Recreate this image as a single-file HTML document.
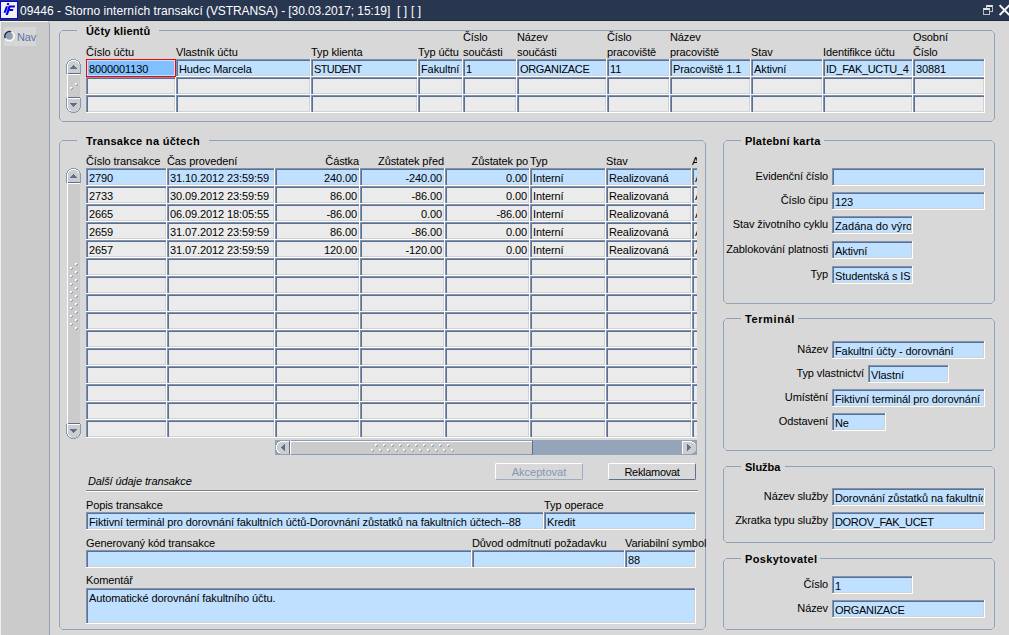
<!DOCTYPE html><html><head><meta charset="utf-8"><style>
*{box-sizing:border-box}
html,body{margin:0;padding:0}
body{width:1009px;height:635px;overflow:hidden;position:relative;background:#d8d8d8;font-family:"Liberation Sans",sans-serif;font-size:11px;color:#000}
div{position:absolute}
.title{left:0;top:0;width:1009px;height:21px;background:#283650;border-bottom:1px solid #1f2a3d}
.tline{left:0;top:21px;width:48px;height:1px;background:#f8f8f8}
.ttext{left:20px;top:4px;font-size:12px;line-height:14px;color:#fff;white-space:nowrap;letter-spacing:0.06px}
.nav{left:0;top:22px;width:49px;height:613px;background:#cbcbcb;border-left:1px solid #eeeeee}
.f{box-shadow:inset -1px -1px 0 #fff,inset 1px 1px 0 #7f92af,inset 2px 2px 0 #5c7092,inset -2px -2px 0 #d2d2d2;overflow:hidden;white-space:nowrap}
.sel{box-shadow:inset 0 0 0 1px #ff0000,inset 0 0 0 2px #c4e2ff}
.c{left:2px;top:2px;right:2px;bottom:2px;overflow:hidden}
.tl{position:absolute;left:1px;top:2px;line-height:13px;letter-spacing:-0.1px}
.tr{position:absolute;right:1px;top:2px;line-height:13px;letter-spacing:-0.1px}
.lb{line-height:13px;white-space:nowrap;letter-spacing:-0.1px}
.lg{line-height:13px;white-space:nowrap;font-weight:bold}
.fr{border:1px solid #91a2b8;border-radius:4px}
.gap{height:1px;background:#d8d8d8}
.vtrack{width:13px;background:#cbcbcb;border-left:1px solid #fff}
.vbtn{width:15px;height:15px;background:#cdcdcd;border:1px solid #7d90ad}
.vbtn.up{border-radius:7px 7px 0 0;border-bottom:1px solid #5c7091;box-shadow:inset 1px 1px 0 #fff}
.vbtn.dn{border-radius:0 0 7px 7px;border-top:1px solid #5c7091;box-shadow:inset 1px 0 0 #fff}
.vbtn i{position:absolute;left:3px;width:0;height:0;border-left:4px solid transparent;border-right:4px solid transparent}
.vbtn.up i{top:5px;border-bottom:4px solid #5c7091}
.vbtn.dn i{top:5px;border-top:4px solid #5c7091}
.dot{width:1px;height:1px;background:#fff;box-shadow:1px 0 #fff,0 1px #fff,1px 1px #c5cedb,2px 1px #8397b5,1px 2px #8397b5}
.btn{height:17px;border:1px solid #5c7091;border-top-color:#fff;border-left-color:#fff;border-radius:2px;background:#d8d8d8;text-align:center;line-height:13px;padding-top:2px;white-space:nowrap}
</style></head><body>

<div class="title"></div><div class="tline"></div>
<div style="left:0;top:1px;width:18px;height:18px;border:1px solid #0000ff;background:#f3f1ea"><svg width="16" height="16" style="position:absolute;left:0;top:0"><path d="M6.2 1L8.3 1L7.8 3.1L5.7 3.1Z M4.9 4.2L7 4.2L4.7 10.8L2.5 10.8Z M7.7 3.4L14.2 3.4L13.6 5.6L9.4 5.6L9 6.9L12.4 6.9L11.9 9L8.3 9L6.9 13L4.6 13Z" fill="#0000f0"/></svg></div>
<div class="ttext">09446 - Storno interních transakcí </div><div class="ttext" style="left:206px;letter-spacing:-0.08px">(VSTRANSA) - [30.03.2017; 15:19]</div><div class="ttext" style="left:397px">[ ]</div><div class="ttext" style="left:411px">[ ]</div>
<div style="left:986px;top:5px;width:7px;height:7px;border:1px solid #bdbdbd;border-top:2px solid #e0e0e0"></div>
<div style="left:983px;top:8px;width:7px;height:7px;border:1px solid #bdbdbd;border-top:2px solid #e0e0e0;background:#283650"></div>
<svg style="position:absolute;left:999px;top:4px" width="10" height="12"><path d="M0.6 1.2L10.4 11M10.4 1.2L0.6 11" stroke="#f4f4f4" stroke-width="2"/></svg>
<div class="nav"></div><div style="left:49px;top:23px;width:1px;height:612px;background:#91a2b8"></div><div style="left:48px;top:22px;width:1px;height:1px;background:#a3b1c4"></div>
<div style="left:4px;top:27px;width:32px;height:19px;background:#d6d6d6"></div>
<svg style="position:absolute;left:3px;top:30px" width="13" height="13"><circle cx="6.3" cy="6" r="3.4" fill="#8c9eb9"/><circle cx="6.5" cy="6.2" r="4.7" fill="none" stroke="#fff" stroke-width="1.2"/><path d="M2.3 8.1A4.6 4.6 0 0 1 8.1 1.9" fill="none" stroke="#1c2637" stroke-width="1.5"/></svg>
<div class="lb" style="left:17px;top:31px;color:#5d72a4">Nav</div>
<div style="left:62px;top:30px;width:930px;height:1px;background:#91a2b8"></div>
<div style="left:62px;top:121px;width:930px;height:1px;background:#91a2b8"></div>
<div style="left:59px;top:33px;width:1px;height:86px;background:#91a2b8"></div>
<div style="left:994px;top:33px;width:1px;height:86px;background:#91a2b8"></div>
<div style="left:61px;top:31px;width:1px;height:1px;background:#a3b1c4"></div>
<div style="left:60px;top:32px;width:1px;height:1px;background:#a3b1c4"></div>
<div style="left:992px;top:31px;width:1px;height:1px;background:#a3b1c4"></div>
<div style="left:993px;top:32px;width:1px;height:1px;background:#a3b1c4"></div>
<div style="left:61px;top:120px;width:1px;height:1px;background:#a3b1c4"></div>
<div style="left:60px;top:119px;width:1px;height:1px;background:#a3b1c4"></div>
<div style="left:992px;top:120px;width:1px;height:1px;background:#a3b1c4"></div>
<div style="left:993px;top:119px;width:1px;height:1px;background:#a3b1c4"></div>
<div class="gap" style="left:77px;top:30px;width:82px"></div>
<div class="lg" style="left:86px;top:25px;letter-spacing:0.16px">Účty klientů</div>
<div class="lb" style="left:86px;top:46px;">Číslo účtu</div>
<div class="lb" style="left:176px;top:46px;">Vlastník účtu</div>
<div class="lb" style="left:311px;top:46px;">Typ klienta</div>
<div class="lb" style="left:418px;top:46px;">Typ účtu</div>
<div class="lb" style="left:463px;top:46px;">součásti</div>
<div class="lb" style="left:463px;top:31px;">Číslo</div>
<div class="lb" style="left:517px;top:46px;">součásti</div>
<div class="lb" style="left:517px;top:31px;">Název</div>
<div class="lb" style="left:607px;top:46px;">pracoviště</div>
<div class="lb" style="left:607px;top:31px;">Číslo</div>
<div class="lb" style="left:670px;top:46px;">pracoviště</div>
<div class="lb" style="left:670px;top:31px;">Název</div>
<div class="lb" style="left:751px;top:46px;">Stav</div>
<div class="lb" style="left:823px;top:46px;">Identifikce účtu</div>
<div class="lb" style="left:913px;top:46px;">Číslo</div>
<div class="lb" style="left:913px;top:31px;">Osobní</div>
<div class="f sel" style="left:86px;top:59px;width:90px;height:18px;background:#80c0ff"><div class="c"><span class="tl">8000001130</span></div></div>
<div class="f" style="left:176px;top:59px;width:135px;height:18px;background:#c0e0ff"><div class="c"><span class="tl">Hudec Marcela</span></div></div>
<div class="f" style="left:311px;top:59px;width:107px;height:18px;background:#c0e0ff"><div class="c"><span class="tl" style="letter-spacing:-0.6px">STUDENT</span></div></div>
<div class="f" style="left:418px;top:59px;width:45px;height:18px;background:#c0e0ff"><div class="c"><span class="tl">Fakultní</span></div></div>
<div class="f" style="left:463px;top:59px;width:54px;height:18px;background:#c0e0ff"><div class="c"><span class="tl">1</span></div></div>
<div class="f" style="left:517px;top:59px;width:90px;height:18px;background:#c0e0ff"><div class="c"><span class="tl" style="letter-spacing:-0.33px">ORGANIZACE</span></div></div>
<div class="f" style="left:607px;top:59px;width:63px;height:18px;background:#c0e0ff"><div class="c"><span class="tl">11</span></div></div>
<div class="f" style="left:670px;top:59px;width:81px;height:18px;background:#c0e0ff"><div class="c"><span class="tl">Pracoviště 1.1</span></div></div>
<div class="f" style="left:751px;top:59px;width:72px;height:18px;background:#c0e0ff"><div class="c"><span class="tl">Aktivní</span></div></div>
<div class="f" style="left:823px;top:59px;width:90px;height:18px;background:#c0e0ff"><div class="c"><span class="tl" style="letter-spacing:-0.33px">ID_FAK_UCTU_4</span></div></div>
<div class="f" style="left:913px;top:59px;width:72px;height:18px;background:#c0e0ff"><div class="c"><span class="tl">30881</span></div></div>
<div class="f" style="left:86px;top:77px;width:90px;height:18px;background:#ebebeb"></div>
<div class="f" style="left:176px;top:77px;width:135px;height:18px;background:#ebebeb"></div>
<div class="f" style="left:311px;top:77px;width:107px;height:18px;background:#ebebeb"></div>
<div class="f" style="left:418px;top:77px;width:45px;height:18px;background:#ebebeb"></div>
<div class="f" style="left:463px;top:77px;width:54px;height:18px;background:#ebebeb"></div>
<div class="f" style="left:517px;top:77px;width:90px;height:18px;background:#ebebeb"></div>
<div class="f" style="left:607px;top:77px;width:63px;height:18px;background:#ebebeb"></div>
<div class="f" style="left:670px;top:77px;width:81px;height:18px;background:#ebebeb"></div>
<div class="f" style="left:751px;top:77px;width:72px;height:18px;background:#ebebeb"></div>
<div class="f" style="left:823px;top:77px;width:90px;height:18px;background:#ebebeb"></div>
<div class="f" style="left:913px;top:77px;width:72px;height:18px;background:#ebebeb"></div>
<div class="f" style="left:86px;top:95px;width:90px;height:18px;background:#ebebeb"></div>
<div class="f" style="left:176px;top:95px;width:135px;height:18px;background:#ebebeb"></div>
<div class="f" style="left:311px;top:95px;width:107px;height:18px;background:#ebebeb"></div>
<div class="f" style="left:418px;top:95px;width:45px;height:18px;background:#ebebeb"></div>
<div class="f" style="left:463px;top:95px;width:54px;height:18px;background:#ebebeb"></div>
<div class="f" style="left:517px;top:95px;width:90px;height:18px;background:#ebebeb"></div>
<div class="f" style="left:607px;top:95px;width:63px;height:18px;background:#ebebeb"></div>
<div class="f" style="left:670px;top:95px;width:81px;height:18px;background:#ebebeb"></div>
<div class="f" style="left:751px;top:95px;width:72px;height:18px;background:#ebebeb"></div>
<div class="f" style="left:823px;top:95px;width:90px;height:18px;background:#ebebeb"></div>
<div class="f" style="left:913px;top:95px;width:72px;height:18px;background:#ebebeb"></div>
<div style="left:67px;top:74px;width:13px;height:23px;background:#cbcbcb;border-left:1px solid #fff"></div>
<svg style="position:absolute;left:66px;top:59px" width="15" height="16" shape-rendering="crispEdges"><rect x="5" y="0" width="5" height="1" fill="#8497b4"/><rect x="3" y="1" width="2" height="1" fill="#8497b4"/><rect x="5" y="1" width="5" height="1" fill="#ffffff"/><rect x="10" y="1" width="2" height="1" fill="#8497b4"/><rect x="2" y="2" width="1" height="1" fill="#8497b4"/><rect x="3" y="2" width="2" height="1" fill="#ffffff"/><rect x="5" y="2" width="5" height="1" fill="#cdcdcd"/><rect x="10" y="2" width="2" height="1" fill="#ffffff"/><rect x="12" y="2" width="1" height="1" fill="#8497b4"/><rect x="1" y="3" width="1" height="1" fill="#8497b4"/><rect x="2" y="3" width="1" height="1" fill="#ffffff"/><rect x="3" y="3" width="9" height="1" fill="#cdcdcd"/><rect x="12" y="3" width="1" height="1" fill="#ffffff"/><rect x="13" y="3" width="1" height="1" fill="#8497b4"/><rect x="1" y="4" width="1" height="1" fill="#8497b4"/><rect x="2" y="4" width="1" height="1" fill="#ffffff"/><rect x="3" y="4" width="9" height="1" fill="#cdcdcd"/><rect x="12" y="4" width="1" height="1" fill="#ffffff"/><rect x="13" y="4" width="1" height="1" fill="#8497b4"/><rect x="0" y="5" width="1" height="1" fill="#8497b4"/><rect x="1" y="5" width="1" height="1" fill="#ffffff"/><rect x="2" y="5" width="12" height="1" fill="#cdcdcd"/><rect x="14" y="5" width="1" height="1" fill="#8497b4"/><rect x="0" y="6" width="1" height="1" fill="#8497b4"/><rect x="1" y="6" width="1" height="1" fill="#ffffff"/><rect x="2" y="6" width="5" height="1" fill="#cdcdcd"/><rect x="7" y="6" width="1" height="1" fill="#5a6f92"/><rect x="8" y="6" width="6" height="1" fill="#cdcdcd"/><rect x="14" y="6" width="1" height="1" fill="#8497b4"/><rect x="0" y="7" width="1" height="1" fill="#8497b4"/><rect x="1" y="7" width="1" height="1" fill="#ffffff"/><rect x="2" y="7" width="4" height="1" fill="#cdcdcd"/><rect x="6" y="7" width="3" height="1" fill="#5a6f92"/><rect x="9" y="7" width="5" height="1" fill="#cdcdcd"/><rect x="14" y="7" width="1" height="1" fill="#8497b4"/><rect x="0" y="8" width="1" height="1" fill="#8497b4"/><rect x="1" y="8" width="1" height="1" fill="#ffffff"/><rect x="2" y="8" width="3" height="1" fill="#cdcdcd"/><rect x="5" y="8" width="5" height="1" fill="#5a6f92"/><rect x="10" y="8" width="4" height="1" fill="#cdcdcd"/><rect x="14" y="8" width="1" height="1" fill="#8497b4"/><rect x="0" y="9" width="1" height="1" fill="#8497b4"/><rect x="1" y="9" width="1" height="1" fill="#ffffff"/><rect x="2" y="9" width="2" height="1" fill="#cdcdcd"/><rect x="4" y="9" width="7" height="1" fill="#5a6f92"/><rect x="11" y="9" width="3" height="1" fill="#cdcdcd"/><rect x="14" y="9" width="1" height="1" fill="#8497b4"/><rect x="0" y="10" width="1" height="1" fill="#8497b4"/><rect x="1" y="10" width="1" height="1" fill="#ffffff"/><rect x="2" y="10" width="12" height="1" fill="#cdcdcd"/><rect x="14" y="10" width="1" height="1" fill="#8497b4"/><rect x="0" y="11" width="1" height="1" fill="#8497b4"/><rect x="1" y="11" width="1" height="1" fill="#ffffff"/><rect x="2" y="11" width="12" height="1" fill="#cdcdcd"/><rect x="14" y="11" width="1" height="1" fill="#8497b4"/><rect x="0" y="12" width="1" height="1" fill="#8497b4"/><rect x="1" y="12" width="1" height="1" fill="#ffffff"/><rect x="2" y="12" width="12" height="1" fill="#cdcdcd"/><rect x="14" y="12" width="1" height="1" fill="#8497b4"/><rect x="0" y="13" width="1" height="1" fill="#8497b4"/><rect x="1" y="13" width="1" height="1" fill="#ffffff"/><rect x="2" y="13" width="12" height="1" fill="#cdcdcd"/><rect x="14" y="13" width="1" height="1" fill="#8497b4"/><rect x="0" y="14" width="1" height="1" fill="#8497b4"/><rect x="1" y="14" width="1" height="1" fill="#ffffff"/><rect x="2" y="14" width="12" height="1" fill="#5a6f92"/><rect x="14" y="14" width="1" height="1" fill="#8497b4"/><rect x="1" y="15" width="13" height="1" fill="#ffffff"/></svg>
<svg style="position:absolute;left:66px;top:97px" width="15" height="16" shape-rendering="crispEdges"><rect x="1" y="0" width="1" height="1" fill="#ffffff"/><rect x="2" y="0" width="12" height="1" fill="#5a6f92"/><rect x="0" y="1" width="1" height="1" fill="#8497b4"/><rect x="1" y="1" width="13" height="1" fill="#ffffff"/><rect x="14" y="1" width="1" height="1" fill="#8497b4"/><rect x="0" y="2" width="1" height="1" fill="#8497b4"/><rect x="1" y="2" width="1" height="1" fill="#ffffff"/><rect x="2" y="2" width="12" height="1" fill="#cdcdcd"/><rect x="14" y="2" width="1" height="1" fill="#8497b4"/><rect x="0" y="3" width="1" height="1" fill="#8497b4"/><rect x="1" y="3" width="1" height="1" fill="#ffffff"/><rect x="2" y="3" width="12" height="1" fill="#cdcdcd"/><rect x="14" y="3" width="1" height="1" fill="#8497b4"/><rect x="0" y="4" width="1" height="1" fill="#8497b4"/><rect x="1" y="4" width="1" height="1" fill="#ffffff"/><rect x="2" y="4" width="12" height="1" fill="#cdcdcd"/><rect x="14" y="4" width="1" height="1" fill="#8497b4"/><rect x="0" y="5" width="1" height="1" fill="#8497b4"/><rect x="1" y="5" width="1" height="1" fill="#ffffff"/><rect x="2" y="5" width="12" height="1" fill="#cdcdcd"/><rect x="14" y="5" width="1" height="1" fill="#8497b4"/><rect x="0" y="6" width="1" height="1" fill="#8497b4"/><rect x="1" y="6" width="1" height="1" fill="#ffffff"/><rect x="2" y="6" width="2" height="1" fill="#cdcdcd"/><rect x="4" y="6" width="7" height="1" fill="#5a6f92"/><rect x="11" y="6" width="3" height="1" fill="#cdcdcd"/><rect x="14" y="6" width="1" height="1" fill="#8497b4"/><rect x="0" y="7" width="1" height="1" fill="#8497b4"/><rect x="1" y="7" width="1" height="1" fill="#ffffff"/><rect x="2" y="7" width="3" height="1" fill="#cdcdcd"/><rect x="5" y="7" width="5" height="1" fill="#5a6f92"/><rect x="10" y="7" width="4" height="1" fill="#cdcdcd"/><rect x="14" y="7" width="1" height="1" fill="#8497b4"/><rect x="0" y="8" width="1" height="1" fill="#8497b4"/><rect x="1" y="8" width="1" height="1" fill="#ffffff"/><rect x="2" y="8" width="4" height="1" fill="#cdcdcd"/><rect x="6" y="8" width="3" height="1" fill="#5a6f92"/><rect x="9" y="8" width="5" height="1" fill="#cdcdcd"/><rect x="14" y="8" width="1" height="1" fill="#8497b4"/><rect x="0" y="9" width="1" height="1" fill="#8497b4"/><rect x="1" y="9" width="1" height="1" fill="#ffffff"/><rect x="2" y="9" width="5" height="1" fill="#cdcdcd"/><rect x="7" y="9" width="1" height="1" fill="#5a6f92"/><rect x="8" y="9" width="6" height="1" fill="#cdcdcd"/><rect x="14" y="9" width="1" height="1" fill="#8497b4"/><rect x="0" y="10" width="1" height="1" fill="#8497b4"/><rect x="1" y="10" width="1" height="1" fill="#ffffff"/><rect x="2" y="10" width="12" height="1" fill="#cdcdcd"/><rect x="14" y="10" width="1" height="1" fill="#8497b4"/><rect x="1" y="11" width="1" height="1" fill="#8497b4"/><rect x="2" y="11" width="1" height="1" fill="#ffffff"/><rect x="3" y="11" width="10" height="1" fill="#cdcdcd"/><rect x="13" y="11" width="1" height="1" fill="#8497b4"/><rect x="1" y="12" width="1" height="1" fill="#8497b4"/><rect x="2" y="12" width="1" height="1" fill="#ffffff"/><rect x="3" y="12" width="10" height="1" fill="#cdcdcd"/><rect x="13" y="12" width="1" height="1" fill="#8497b4"/><rect x="2" y="13" width="1" height="1" fill="#8497b4"/><rect x="3" y="13" width="2" height="1" fill="#ffffff"/><rect x="5" y="13" width="7" height="1" fill="#cdcdcd"/><rect x="12" y="13" width="1" height="1" fill="#8497b4"/><rect x="3" y="14" width="2" height="1" fill="#8497b4"/><rect x="5" y="14" width="5" height="1" fill="#cdcdcd"/><rect x="10" y="14" width="2" height="1" fill="#8497b4"/><rect x="5" y="15" width="5" height="1" fill="#8497b4"/></svg>
<div class="dot" style="left:75px;top:83px"></div>
<div class="dot" style="left:70px;top:87px"></div>
<div style="left:62px;top:140px;width:641px;height:1px;background:#91a2b8"></div>
<div style="left:62px;top:629px;width:641px;height:1px;background:#91a2b8"></div>
<div style="left:59px;top:143px;width:1px;height:484px;background:#91a2b8"></div>
<div style="left:705px;top:143px;width:1px;height:484px;background:#91a2b8"></div>
<div style="left:61px;top:141px;width:1px;height:1px;background:#a3b1c4"></div>
<div style="left:60px;top:142px;width:1px;height:1px;background:#a3b1c4"></div>
<div style="left:703px;top:141px;width:1px;height:1px;background:#a3b1c4"></div>
<div style="left:704px;top:142px;width:1px;height:1px;background:#a3b1c4"></div>
<div style="left:61px;top:628px;width:1px;height:1px;background:#a3b1c4"></div>
<div style="left:60px;top:627px;width:1px;height:1px;background:#a3b1c4"></div>
<div style="left:703px;top:628px;width:1px;height:1px;background:#a3b1c4"></div>
<div style="left:704px;top:627px;width:1px;height:1px;background:#a3b1c4"></div>
<div class="gap" style="left:77px;top:140px;width:132px"></div>
<div class="lg" style="left:86px;top:135px;letter-spacing:0.3px">Transakce na účtech</div>
<div style="left:0;top:0;width:697px;height:635px;overflow:hidden">
<div class="lb" style="left:86px;top:155px;">Číslo transakce</div>
<div class="lb" style="left:167px;top:155px;">Čas provedení</div>
<div class="lb" style="right:338px;top:155px;text-align:right;">Částka</div>
<div class="lb" style="right:253px;top:155px;text-align:right;">Zůstatek před</div>
<div class="lb" style="right:169px;top:155px;text-align:right;">Zůstatek po</div>
<div class="lb" style="left:530px;top:155px;">Typ</div>
<div class="lb" style="left:606px;top:155px;">Stav</div>
<div class="lb" style="left:692px;top:155px;">Autorizace</div>
<div class="f" style="left:86px;top:168px;width:81px;height:18px;background:#c0e0ff"><div class="c"><span class="tl">2790</span></div></div>
<div class="f" style="left:167px;top:168px;width:108px;height:18px;background:#c0e0ff"><div class="c"><span class="tl">31.10.2012 23:59:59</span></div></div>
<div class="f" style="left:275px;top:168px;width:85px;height:18px;background:#c0e0ff"><div class="c"><span class="tr">240.00</span></div></div>
<div class="f" style="left:360px;top:168px;width:85px;height:18px;background:#c0e0ff"><div class="c"><span class="tr">-240.00</span></div></div>
<div class="f" style="left:445px;top:168px;width:85px;height:18px;background:#c0e0ff"><div class="c"><span class="tr">0.00</span></div></div>
<div class="f" style="left:530px;top:168px;width:76px;height:18px;background:#c0e0ff"><div class="c"><span class="tl">Interní</span></div></div>
<div class="f" style="left:606px;top:168px;width:86px;height:18px;background:#c0e0ff"><div class="c"><span class="tl">Realizovaná</span></div></div>
<div class="f" style="left:692px;top:168px;width:90px;height:18px;background:#c0e0ff"><div class="c"><span class="tl">Ano</span></div></div>
<div class="f" style="left:86px;top:186px;width:81px;height:18px;background:#ebebeb"><div class="c"><span class="tl">2733</span></div></div>
<div class="f" style="left:167px;top:186px;width:108px;height:18px;background:#ebebeb"><div class="c"><span class="tl">30.09.2012 23:59:59</span></div></div>
<div class="f" style="left:275px;top:186px;width:85px;height:18px;background:#ebebeb"><div class="c"><span class="tr">86.00</span></div></div>
<div class="f" style="left:360px;top:186px;width:85px;height:18px;background:#ebebeb"><div class="c"><span class="tr">-86.00</span></div></div>
<div class="f" style="left:445px;top:186px;width:85px;height:18px;background:#ebebeb"><div class="c"><span class="tr">0.00</span></div></div>
<div class="f" style="left:530px;top:186px;width:76px;height:18px;background:#ebebeb"><div class="c"><span class="tl">Interní</span></div></div>
<div class="f" style="left:606px;top:186px;width:86px;height:18px;background:#ebebeb"><div class="c"><span class="tl">Realizovaná</span></div></div>
<div class="f" style="left:692px;top:186px;width:90px;height:18px;background:#ebebeb"><div class="c"><span class="tl">Ano</span></div></div>
<div class="f" style="left:86px;top:204px;width:81px;height:18px;background:#ebebeb"><div class="c"><span class="tl">2665</span></div></div>
<div class="f" style="left:167px;top:204px;width:108px;height:18px;background:#ebebeb"><div class="c"><span class="tl">06.09.2012 18:05:55</span></div></div>
<div class="f" style="left:275px;top:204px;width:85px;height:18px;background:#ebebeb"><div class="c"><span class="tr">-86.00</span></div></div>
<div class="f" style="left:360px;top:204px;width:85px;height:18px;background:#ebebeb"><div class="c"><span class="tr">0.00</span></div></div>
<div class="f" style="left:445px;top:204px;width:85px;height:18px;background:#ebebeb"><div class="c"><span class="tr">-86.00</span></div></div>
<div class="f" style="left:530px;top:204px;width:76px;height:18px;background:#ebebeb"><div class="c"><span class="tl">Interní</span></div></div>
<div class="f" style="left:606px;top:204px;width:86px;height:18px;background:#ebebeb"><div class="c"><span class="tl">Realizovaná</span></div></div>
<div class="f" style="left:692px;top:204px;width:90px;height:18px;background:#ebebeb"><div class="c"><span class="tl">Ano</span></div></div>
<div class="f" style="left:86px;top:222px;width:81px;height:18px;background:#ebebeb"><div class="c"><span class="tl">2659</span></div></div>
<div class="f" style="left:167px;top:222px;width:108px;height:18px;background:#ebebeb"><div class="c"><span class="tl">31.07.2012 23:59:59</span></div></div>
<div class="f" style="left:275px;top:222px;width:85px;height:18px;background:#ebebeb"><div class="c"><span class="tr">86.00</span></div></div>
<div class="f" style="left:360px;top:222px;width:85px;height:18px;background:#ebebeb"><div class="c"><span class="tr">-86.00</span></div></div>
<div class="f" style="left:445px;top:222px;width:85px;height:18px;background:#ebebeb"><div class="c"><span class="tr">0.00</span></div></div>
<div class="f" style="left:530px;top:222px;width:76px;height:18px;background:#ebebeb"><div class="c"><span class="tl">Interní</span></div></div>
<div class="f" style="left:606px;top:222px;width:86px;height:18px;background:#ebebeb"><div class="c"><span class="tl">Realizovaná</span></div></div>
<div class="f" style="left:692px;top:222px;width:90px;height:18px;background:#ebebeb"><div class="c"><span class="tl">Ano</span></div></div>
<div class="f" style="left:86px;top:240px;width:81px;height:18px;background:#ebebeb"><div class="c"><span class="tl">2657</span></div></div>
<div class="f" style="left:167px;top:240px;width:108px;height:18px;background:#ebebeb"><div class="c"><span class="tl">31.07.2012 23:59:59</span></div></div>
<div class="f" style="left:275px;top:240px;width:85px;height:18px;background:#ebebeb"><div class="c"><span class="tr">120.00</span></div></div>
<div class="f" style="left:360px;top:240px;width:85px;height:18px;background:#ebebeb"><div class="c"><span class="tr">-120.00</span></div></div>
<div class="f" style="left:445px;top:240px;width:85px;height:18px;background:#ebebeb"><div class="c"><span class="tr">0.00</span></div></div>
<div class="f" style="left:530px;top:240px;width:76px;height:18px;background:#ebebeb"><div class="c"><span class="tl">Interní</span></div></div>
<div class="f" style="left:606px;top:240px;width:86px;height:18px;background:#ebebeb"><div class="c"><span class="tl">Realizovaná</span></div></div>
<div class="f" style="left:692px;top:240px;width:90px;height:18px;background:#ebebeb"><div class="c"><span class="tl">Ano</span></div></div>
<div class="f" style="left:86px;top:258px;width:81px;height:18px;background:#ebebeb"></div>
<div class="f" style="left:167px;top:258px;width:108px;height:18px;background:#ebebeb"></div>
<div class="f" style="left:275px;top:258px;width:85px;height:18px;background:#ebebeb"></div>
<div class="f" style="left:360px;top:258px;width:85px;height:18px;background:#ebebeb"></div>
<div class="f" style="left:445px;top:258px;width:85px;height:18px;background:#ebebeb"></div>
<div class="f" style="left:530px;top:258px;width:76px;height:18px;background:#ebebeb"></div>
<div class="f" style="left:606px;top:258px;width:86px;height:18px;background:#ebebeb"></div>
<div class="f" style="left:692px;top:258px;width:90px;height:18px;background:#ebebeb"></div>
<div class="f" style="left:86px;top:276px;width:81px;height:18px;background:#ebebeb"></div>
<div class="f" style="left:167px;top:276px;width:108px;height:18px;background:#ebebeb"></div>
<div class="f" style="left:275px;top:276px;width:85px;height:18px;background:#ebebeb"></div>
<div class="f" style="left:360px;top:276px;width:85px;height:18px;background:#ebebeb"></div>
<div class="f" style="left:445px;top:276px;width:85px;height:18px;background:#ebebeb"></div>
<div class="f" style="left:530px;top:276px;width:76px;height:18px;background:#ebebeb"></div>
<div class="f" style="left:606px;top:276px;width:86px;height:18px;background:#ebebeb"></div>
<div class="f" style="left:692px;top:276px;width:90px;height:18px;background:#ebebeb"></div>
<div class="f" style="left:86px;top:294px;width:81px;height:18px;background:#ebebeb"></div>
<div class="f" style="left:167px;top:294px;width:108px;height:18px;background:#ebebeb"></div>
<div class="f" style="left:275px;top:294px;width:85px;height:18px;background:#ebebeb"></div>
<div class="f" style="left:360px;top:294px;width:85px;height:18px;background:#ebebeb"></div>
<div class="f" style="left:445px;top:294px;width:85px;height:18px;background:#ebebeb"></div>
<div class="f" style="left:530px;top:294px;width:76px;height:18px;background:#ebebeb"></div>
<div class="f" style="left:606px;top:294px;width:86px;height:18px;background:#ebebeb"></div>
<div class="f" style="left:692px;top:294px;width:90px;height:18px;background:#ebebeb"></div>
<div class="f" style="left:86px;top:312px;width:81px;height:18px;background:#ebebeb"></div>
<div class="f" style="left:167px;top:312px;width:108px;height:18px;background:#ebebeb"></div>
<div class="f" style="left:275px;top:312px;width:85px;height:18px;background:#ebebeb"></div>
<div class="f" style="left:360px;top:312px;width:85px;height:18px;background:#ebebeb"></div>
<div class="f" style="left:445px;top:312px;width:85px;height:18px;background:#ebebeb"></div>
<div class="f" style="left:530px;top:312px;width:76px;height:18px;background:#ebebeb"></div>
<div class="f" style="left:606px;top:312px;width:86px;height:18px;background:#ebebeb"></div>
<div class="f" style="left:692px;top:312px;width:90px;height:18px;background:#ebebeb"></div>
<div class="f" style="left:86px;top:330px;width:81px;height:18px;background:#ebebeb"></div>
<div class="f" style="left:167px;top:330px;width:108px;height:18px;background:#ebebeb"></div>
<div class="f" style="left:275px;top:330px;width:85px;height:18px;background:#ebebeb"></div>
<div class="f" style="left:360px;top:330px;width:85px;height:18px;background:#ebebeb"></div>
<div class="f" style="left:445px;top:330px;width:85px;height:18px;background:#ebebeb"></div>
<div class="f" style="left:530px;top:330px;width:76px;height:18px;background:#ebebeb"></div>
<div class="f" style="left:606px;top:330px;width:86px;height:18px;background:#ebebeb"></div>
<div class="f" style="left:692px;top:330px;width:90px;height:18px;background:#ebebeb"></div>
<div class="f" style="left:86px;top:348px;width:81px;height:18px;background:#ebebeb"></div>
<div class="f" style="left:167px;top:348px;width:108px;height:18px;background:#ebebeb"></div>
<div class="f" style="left:275px;top:348px;width:85px;height:18px;background:#ebebeb"></div>
<div class="f" style="left:360px;top:348px;width:85px;height:18px;background:#ebebeb"></div>
<div class="f" style="left:445px;top:348px;width:85px;height:18px;background:#ebebeb"></div>
<div class="f" style="left:530px;top:348px;width:76px;height:18px;background:#ebebeb"></div>
<div class="f" style="left:606px;top:348px;width:86px;height:18px;background:#ebebeb"></div>
<div class="f" style="left:692px;top:348px;width:90px;height:18px;background:#ebebeb"></div>
<div class="f" style="left:86px;top:366px;width:81px;height:18px;background:#ebebeb"></div>
<div class="f" style="left:167px;top:366px;width:108px;height:18px;background:#ebebeb"></div>
<div class="f" style="left:275px;top:366px;width:85px;height:18px;background:#ebebeb"></div>
<div class="f" style="left:360px;top:366px;width:85px;height:18px;background:#ebebeb"></div>
<div class="f" style="left:445px;top:366px;width:85px;height:18px;background:#ebebeb"></div>
<div class="f" style="left:530px;top:366px;width:76px;height:18px;background:#ebebeb"></div>
<div class="f" style="left:606px;top:366px;width:86px;height:18px;background:#ebebeb"></div>
<div class="f" style="left:692px;top:366px;width:90px;height:18px;background:#ebebeb"></div>
<div class="f" style="left:86px;top:384px;width:81px;height:18px;background:#ebebeb"></div>
<div class="f" style="left:167px;top:384px;width:108px;height:18px;background:#ebebeb"></div>
<div class="f" style="left:275px;top:384px;width:85px;height:18px;background:#ebebeb"></div>
<div class="f" style="left:360px;top:384px;width:85px;height:18px;background:#ebebeb"></div>
<div class="f" style="left:445px;top:384px;width:85px;height:18px;background:#ebebeb"></div>
<div class="f" style="left:530px;top:384px;width:76px;height:18px;background:#ebebeb"></div>
<div class="f" style="left:606px;top:384px;width:86px;height:18px;background:#ebebeb"></div>
<div class="f" style="left:692px;top:384px;width:90px;height:18px;background:#ebebeb"></div>
<div class="f" style="left:86px;top:402px;width:81px;height:18px;background:#ebebeb"></div>
<div class="f" style="left:167px;top:402px;width:108px;height:18px;background:#ebebeb"></div>
<div class="f" style="left:275px;top:402px;width:85px;height:18px;background:#ebebeb"></div>
<div class="f" style="left:360px;top:402px;width:85px;height:18px;background:#ebebeb"></div>
<div class="f" style="left:445px;top:402px;width:85px;height:18px;background:#ebebeb"></div>
<div class="f" style="left:530px;top:402px;width:76px;height:18px;background:#ebebeb"></div>
<div class="f" style="left:606px;top:402px;width:86px;height:18px;background:#ebebeb"></div>
<div class="f" style="left:692px;top:402px;width:90px;height:18px;background:#ebebeb"></div>
<div class="f" style="left:86px;top:420px;width:81px;height:18px;background:#ebebeb"></div>
<div class="f" style="left:167px;top:420px;width:108px;height:18px;background:#ebebeb"></div>
<div class="f" style="left:275px;top:420px;width:85px;height:18px;background:#ebebeb"></div>
<div class="f" style="left:360px;top:420px;width:85px;height:18px;background:#ebebeb"></div>
<div class="f" style="left:445px;top:420px;width:85px;height:18px;background:#ebebeb"></div>
<div class="f" style="left:530px;top:420px;width:76px;height:18px;background:#ebebeb"></div>
<div class="f" style="left:606px;top:420px;width:86px;height:18px;background:#ebebeb"></div>
<div class="f" style="left:692px;top:420px;width:90px;height:18px;background:#ebebeb"></div>
</div>
<div style="left:67px;top:183px;width:13px;height:240px;background:#cbcbcb;border-left:1px solid #fff"></div>
<svg style="position:absolute;left:66px;top:168px" width="15" height="16" shape-rendering="crispEdges"><rect x="5" y="0" width="5" height="1" fill="#8497b4"/><rect x="3" y="1" width="2" height="1" fill="#8497b4"/><rect x="5" y="1" width="5" height="1" fill="#ffffff"/><rect x="10" y="1" width="2" height="1" fill="#8497b4"/><rect x="2" y="2" width="1" height="1" fill="#8497b4"/><rect x="3" y="2" width="2" height="1" fill="#ffffff"/><rect x="5" y="2" width="5" height="1" fill="#cdcdcd"/><rect x="10" y="2" width="2" height="1" fill="#ffffff"/><rect x="12" y="2" width="1" height="1" fill="#8497b4"/><rect x="1" y="3" width="1" height="1" fill="#8497b4"/><rect x="2" y="3" width="1" height="1" fill="#ffffff"/><rect x="3" y="3" width="9" height="1" fill="#cdcdcd"/><rect x="12" y="3" width="1" height="1" fill="#ffffff"/><rect x="13" y="3" width="1" height="1" fill="#8497b4"/><rect x="1" y="4" width="1" height="1" fill="#8497b4"/><rect x="2" y="4" width="1" height="1" fill="#ffffff"/><rect x="3" y="4" width="9" height="1" fill="#cdcdcd"/><rect x="12" y="4" width="1" height="1" fill="#ffffff"/><rect x="13" y="4" width="1" height="1" fill="#8497b4"/><rect x="0" y="5" width="1" height="1" fill="#8497b4"/><rect x="1" y="5" width="1" height="1" fill="#ffffff"/><rect x="2" y="5" width="12" height="1" fill="#cdcdcd"/><rect x="14" y="5" width="1" height="1" fill="#8497b4"/><rect x="0" y="6" width="1" height="1" fill="#8497b4"/><rect x="1" y="6" width="1" height="1" fill="#ffffff"/><rect x="2" y="6" width="5" height="1" fill="#cdcdcd"/><rect x="7" y="6" width="1" height="1" fill="#5a6f92"/><rect x="8" y="6" width="6" height="1" fill="#cdcdcd"/><rect x="14" y="6" width="1" height="1" fill="#8497b4"/><rect x="0" y="7" width="1" height="1" fill="#8497b4"/><rect x="1" y="7" width="1" height="1" fill="#ffffff"/><rect x="2" y="7" width="4" height="1" fill="#cdcdcd"/><rect x="6" y="7" width="3" height="1" fill="#5a6f92"/><rect x="9" y="7" width="5" height="1" fill="#cdcdcd"/><rect x="14" y="7" width="1" height="1" fill="#8497b4"/><rect x="0" y="8" width="1" height="1" fill="#8497b4"/><rect x="1" y="8" width="1" height="1" fill="#ffffff"/><rect x="2" y="8" width="3" height="1" fill="#cdcdcd"/><rect x="5" y="8" width="5" height="1" fill="#5a6f92"/><rect x="10" y="8" width="4" height="1" fill="#cdcdcd"/><rect x="14" y="8" width="1" height="1" fill="#8497b4"/><rect x="0" y="9" width="1" height="1" fill="#8497b4"/><rect x="1" y="9" width="1" height="1" fill="#ffffff"/><rect x="2" y="9" width="2" height="1" fill="#cdcdcd"/><rect x="4" y="9" width="7" height="1" fill="#5a6f92"/><rect x="11" y="9" width="3" height="1" fill="#cdcdcd"/><rect x="14" y="9" width="1" height="1" fill="#8497b4"/><rect x="0" y="10" width="1" height="1" fill="#8497b4"/><rect x="1" y="10" width="1" height="1" fill="#ffffff"/><rect x="2" y="10" width="12" height="1" fill="#cdcdcd"/><rect x="14" y="10" width="1" height="1" fill="#8497b4"/><rect x="0" y="11" width="1" height="1" fill="#8497b4"/><rect x="1" y="11" width="1" height="1" fill="#ffffff"/><rect x="2" y="11" width="12" height="1" fill="#cdcdcd"/><rect x="14" y="11" width="1" height="1" fill="#8497b4"/><rect x="0" y="12" width="1" height="1" fill="#8497b4"/><rect x="1" y="12" width="1" height="1" fill="#ffffff"/><rect x="2" y="12" width="12" height="1" fill="#cdcdcd"/><rect x="14" y="12" width="1" height="1" fill="#8497b4"/><rect x="0" y="13" width="1" height="1" fill="#8497b4"/><rect x="1" y="13" width="1" height="1" fill="#ffffff"/><rect x="2" y="13" width="12" height="1" fill="#cdcdcd"/><rect x="14" y="13" width="1" height="1" fill="#8497b4"/><rect x="0" y="14" width="1" height="1" fill="#8497b4"/><rect x="1" y="14" width="1" height="1" fill="#ffffff"/><rect x="2" y="14" width="12" height="1" fill="#5a6f92"/><rect x="14" y="14" width="1" height="1" fill="#8497b4"/><rect x="1" y="15" width="13" height="1" fill="#ffffff"/></svg>
<svg style="position:absolute;left:66px;top:423px" width="15" height="16" shape-rendering="crispEdges"><rect x="1" y="0" width="1" height="1" fill="#ffffff"/><rect x="2" y="0" width="12" height="1" fill="#5a6f92"/><rect x="0" y="1" width="1" height="1" fill="#8497b4"/><rect x="1" y="1" width="13" height="1" fill="#ffffff"/><rect x="14" y="1" width="1" height="1" fill="#8497b4"/><rect x="0" y="2" width="1" height="1" fill="#8497b4"/><rect x="1" y="2" width="1" height="1" fill="#ffffff"/><rect x="2" y="2" width="12" height="1" fill="#cdcdcd"/><rect x="14" y="2" width="1" height="1" fill="#8497b4"/><rect x="0" y="3" width="1" height="1" fill="#8497b4"/><rect x="1" y="3" width="1" height="1" fill="#ffffff"/><rect x="2" y="3" width="12" height="1" fill="#cdcdcd"/><rect x="14" y="3" width="1" height="1" fill="#8497b4"/><rect x="0" y="4" width="1" height="1" fill="#8497b4"/><rect x="1" y="4" width="1" height="1" fill="#ffffff"/><rect x="2" y="4" width="12" height="1" fill="#cdcdcd"/><rect x="14" y="4" width="1" height="1" fill="#8497b4"/><rect x="0" y="5" width="1" height="1" fill="#8497b4"/><rect x="1" y="5" width="1" height="1" fill="#ffffff"/><rect x="2" y="5" width="12" height="1" fill="#cdcdcd"/><rect x="14" y="5" width="1" height="1" fill="#8497b4"/><rect x="0" y="6" width="1" height="1" fill="#8497b4"/><rect x="1" y="6" width="1" height="1" fill="#ffffff"/><rect x="2" y="6" width="2" height="1" fill="#cdcdcd"/><rect x="4" y="6" width="7" height="1" fill="#5a6f92"/><rect x="11" y="6" width="3" height="1" fill="#cdcdcd"/><rect x="14" y="6" width="1" height="1" fill="#8497b4"/><rect x="0" y="7" width="1" height="1" fill="#8497b4"/><rect x="1" y="7" width="1" height="1" fill="#ffffff"/><rect x="2" y="7" width="3" height="1" fill="#cdcdcd"/><rect x="5" y="7" width="5" height="1" fill="#5a6f92"/><rect x="10" y="7" width="4" height="1" fill="#cdcdcd"/><rect x="14" y="7" width="1" height="1" fill="#8497b4"/><rect x="0" y="8" width="1" height="1" fill="#8497b4"/><rect x="1" y="8" width="1" height="1" fill="#ffffff"/><rect x="2" y="8" width="4" height="1" fill="#cdcdcd"/><rect x="6" y="8" width="3" height="1" fill="#5a6f92"/><rect x="9" y="8" width="5" height="1" fill="#cdcdcd"/><rect x="14" y="8" width="1" height="1" fill="#8497b4"/><rect x="0" y="9" width="1" height="1" fill="#8497b4"/><rect x="1" y="9" width="1" height="1" fill="#ffffff"/><rect x="2" y="9" width="5" height="1" fill="#cdcdcd"/><rect x="7" y="9" width="1" height="1" fill="#5a6f92"/><rect x="8" y="9" width="6" height="1" fill="#cdcdcd"/><rect x="14" y="9" width="1" height="1" fill="#8497b4"/><rect x="0" y="10" width="1" height="1" fill="#8497b4"/><rect x="1" y="10" width="1" height="1" fill="#ffffff"/><rect x="2" y="10" width="12" height="1" fill="#cdcdcd"/><rect x="14" y="10" width="1" height="1" fill="#8497b4"/><rect x="1" y="11" width="1" height="1" fill="#8497b4"/><rect x="2" y="11" width="1" height="1" fill="#ffffff"/><rect x="3" y="11" width="10" height="1" fill="#cdcdcd"/><rect x="13" y="11" width="1" height="1" fill="#8497b4"/><rect x="1" y="12" width="1" height="1" fill="#8497b4"/><rect x="2" y="12" width="1" height="1" fill="#ffffff"/><rect x="3" y="12" width="10" height="1" fill="#cdcdcd"/><rect x="13" y="12" width="1" height="1" fill="#8497b4"/><rect x="2" y="13" width="1" height="1" fill="#8497b4"/><rect x="3" y="13" width="2" height="1" fill="#ffffff"/><rect x="5" y="13" width="7" height="1" fill="#cdcdcd"/><rect x="12" y="13" width="1" height="1" fill="#8497b4"/><rect x="3" y="14" width="2" height="1" fill="#8497b4"/><rect x="5" y="14" width="5" height="1" fill="#cdcdcd"/><rect x="10" y="14" width="2" height="1" fill="#8497b4"/><rect x="5" y="15" width="5" height="1" fill="#8497b4"/></svg>
<div class="dot" style="left:75px;top:263px"></div>
<div class="dot" style="left:75px;top:271px"></div>
<div class="dot" style="left:75px;top:279px"></div>
<div class="dot" style="left:75px;top:287px"></div>
<div class="dot" style="left:75px;top:295px"></div>
<div class="dot" style="left:75px;top:303px"></div>
<div class="dot" style="left:75px;top:311px"></div>
<div class="dot" style="left:75px;top:319px"></div>
<div class="dot" style="left:75px;top:327px"></div>
<div class="dot" style="left:70px;top:267px"></div>
<div class="dot" style="left:70px;top:275px"></div>
<div class="dot" style="left:70px;top:283px"></div>
<div class="dot" style="left:70px;top:291px"></div>
<div class="dot" style="left:70px;top:299px"></div>
<div class="dot" style="left:70px;top:307px"></div>
<div class="dot" style="left:70px;top:315px"></div>
<div class="dot" style="left:70px;top:323px"></div>
<div style="left:275px;top:440px;width:422px;height:15px;background:#94a5b9"></div>
<div style="left:290px;top:440px;width:243px;height:15px;background:#cbcbcb;border-top:1px solid #8b9cb5;border-bottom:1px solid #8b9cb5;border-right:1px solid #5a6f92;border-left:1px solid #fff;box-shadow:inset 0 1px 0 #fff"></div>
<svg style="position:absolute;left:275px;top:440px" width="15" height="15" shape-rendering="crispEdges"><rect x="0" y="0" width="15" height="1" fill="#92a3b9"/><rect x="0" y="1" width="5" height="1" fill="#92a3b9"/><rect x="5" y="1" width="9" height="1" fill="#ffffff"/><rect x="14" y="1" width="1" height="1" fill="#5a6f92"/><rect x="0" y="2" width="3" height="1" fill="#92a3b9"/><rect x="3" y="2" width="2" height="1" fill="#ffffff"/><rect x="5" y="2" width="9" height="1" fill="#cdcdcd"/><rect x="14" y="2" width="1" height="1" fill="#5a6f92"/><rect x="0" y="3" width="2" height="1" fill="#92a3b9"/><rect x="2" y="3" width="1" height="1" fill="#ffffff"/><rect x="3" y="3" width="11" height="1" fill="#cdcdcd"/><rect x="14" y="3" width="1" height="1" fill="#5a6f92"/><rect x="0" y="4" width="2" height="1" fill="#92a3b9"/><rect x="2" y="4" width="1" height="1" fill="#ffffff"/><rect x="3" y="4" width="6" height="1" fill="#cdcdcd"/><rect x="9" y="4" width="1" height="1" fill="#5a6f92"/><rect x="10" y="4" width="4" height="1" fill="#cdcdcd"/><rect x="14" y="4" width="1" height="1" fill="#5a6f92"/><rect x="0" y="5" width="1" height="1" fill="#92a3b9"/><rect x="1" y="5" width="1" height="1" fill="#ffffff"/><rect x="2" y="5" width="6" height="1" fill="#cdcdcd"/><rect x="8" y="5" width="2" height="1" fill="#5a6f92"/><rect x="10" y="5" width="4" height="1" fill="#cdcdcd"/><rect x="14" y="5" width="1" height="1" fill="#5a6f92"/><rect x="0" y="6" width="1" height="1" fill="#92a3b9"/><rect x="1" y="6" width="1" height="1" fill="#ffffff"/><rect x="2" y="6" width="5" height="1" fill="#cdcdcd"/><rect x="7" y="6" width="3" height="1" fill="#5a6f92"/><rect x="10" y="6" width="4" height="1" fill="#cdcdcd"/><rect x="14" y="6" width="1" height="1" fill="#5a6f92"/><rect x="0" y="7" width="1" height="1" fill="#92a3b9"/><rect x="1" y="7" width="1" height="1" fill="#ffffff"/><rect x="2" y="7" width="4" height="1" fill="#cdcdcd"/><rect x="6" y="7" width="4" height="1" fill="#5a6f92"/><rect x="10" y="7" width="4" height="1" fill="#cdcdcd"/><rect x="14" y="7" width="1" height="1" fill="#5a6f92"/><rect x="0" y="8" width="1" height="1" fill="#92a3b9"/><rect x="1" y="8" width="1" height="1" fill="#ffffff"/><rect x="2" y="8" width="5" height="1" fill="#cdcdcd"/><rect x="7" y="8" width="3" height="1" fill="#5a6f92"/><rect x="10" y="8" width="4" height="1" fill="#cdcdcd"/><rect x="14" y="8" width="1" height="1" fill="#5a6f92"/><rect x="0" y="9" width="1" height="1" fill="#92a3b9"/><rect x="1" y="9" width="1" height="1" fill="#ffffff"/><rect x="2" y="9" width="6" height="1" fill="#cdcdcd"/><rect x="8" y="9" width="2" height="1" fill="#5a6f92"/><rect x="10" y="9" width="4" height="1" fill="#cdcdcd"/><rect x="14" y="9" width="1" height="1" fill="#5a6f92"/><rect x="0" y="10" width="2" height="1" fill="#92a3b9"/><rect x="2" y="10" width="1" height="1" fill="#ffffff"/><rect x="3" y="10" width="6" height="1" fill="#cdcdcd"/><rect x="9" y="10" width="1" height="1" fill="#5a6f92"/><rect x="10" y="10" width="4" height="1" fill="#cdcdcd"/><rect x="14" y="10" width="1" height="1" fill="#5a6f92"/><rect x="0" y="11" width="2" height="1" fill="#92a3b9"/><rect x="2" y="11" width="1" height="1" fill="#ffffff"/><rect x="3" y="11" width="11" height="1" fill="#cdcdcd"/><rect x="14" y="11" width="1" height="1" fill="#5a6f92"/><rect x="0" y="12" width="3" height="1" fill="#92a3b9"/><rect x="3" y="12" width="2" height="1" fill="#ffffff"/><rect x="5" y="12" width="9" height="1" fill="#cdcdcd"/><rect x="14" y="12" width="1" height="1" fill="#5a6f92"/><rect x="0" y="13" width="5" height="1" fill="#92a3b9"/><rect x="5" y="13" width="9" height="1" fill="#cdcdcd"/><rect x="14" y="13" width="1" height="1" fill="#5a6f92"/><rect x="0" y="14" width="15" height="1" fill="#92a3b9"/></svg>
<svg style="position:absolute;left:682px;top:440px" width="15" height="15" shape-rendering="crispEdges"><rect x="0" y="0" width="15" height="1" fill="#92a3b9"/><rect x="0" y="1" width="10" height="1" fill="#ffffff"/><rect x="10" y="1" width="5" height="1" fill="#92a3b9"/><rect x="0" y="2" width="1" height="1" fill="#ffffff"/><rect x="1" y="2" width="9" height="1" fill="#cdcdcd"/><rect x="10" y="2" width="2" height="1" fill="#ffffff"/><rect x="12" y="2" width="3" height="1" fill="#92a3b9"/><rect x="0" y="3" width="1" height="1" fill="#ffffff"/><rect x="1" y="3" width="11" height="1" fill="#cdcdcd"/><rect x="12" y="3" width="1" height="1" fill="#ffffff"/><rect x="13" y="3" width="2" height="1" fill="#92a3b9"/><rect x="0" y="4" width="1" height="1" fill="#ffffff"/><rect x="1" y="4" width="4" height="1" fill="#cdcdcd"/><rect x="5" y="4" width="1" height="1" fill="#5a6f92"/><rect x="6" y="4" width="8" height="1" fill="#cdcdcd"/><rect x="14" y="4" width="1" height="1" fill="#92a3b9"/><rect x="0" y="5" width="1" height="1" fill="#ffffff"/><rect x="1" y="5" width="4" height="1" fill="#cdcdcd"/><rect x="5" y="5" width="2" height="1" fill="#5a6f92"/><rect x="7" y="5" width="7" height="1" fill="#cdcdcd"/><rect x="14" y="5" width="1" height="1" fill="#92a3b9"/><rect x="0" y="6" width="1" height="1" fill="#ffffff"/><rect x="1" y="6" width="4" height="1" fill="#cdcdcd"/><rect x="5" y="6" width="3" height="1" fill="#5a6f92"/><rect x="8" y="6" width="6" height="1" fill="#cdcdcd"/><rect x="14" y="6" width="1" height="1" fill="#92a3b9"/><rect x="0" y="7" width="1" height="1" fill="#ffffff"/><rect x="1" y="7" width="4" height="1" fill="#cdcdcd"/><rect x="5" y="7" width="4" height="1" fill="#5a6f92"/><rect x="9" y="7" width="5" height="1" fill="#cdcdcd"/><rect x="14" y="7" width="1" height="1" fill="#92a3b9"/><rect x="0" y="8" width="1" height="1" fill="#ffffff"/><rect x="1" y="8" width="4" height="1" fill="#cdcdcd"/><rect x="5" y="8" width="3" height="1" fill="#5a6f92"/><rect x="8" y="8" width="6" height="1" fill="#cdcdcd"/><rect x="14" y="8" width="1" height="1" fill="#92a3b9"/><rect x="0" y="9" width="1" height="1" fill="#ffffff"/><rect x="1" y="9" width="4" height="1" fill="#cdcdcd"/><rect x="5" y="9" width="2" height="1" fill="#5a6f92"/><rect x="7" y="9" width="7" height="1" fill="#cdcdcd"/><rect x="14" y="9" width="1" height="1" fill="#92a3b9"/><rect x="0" y="10" width="1" height="1" fill="#ffffff"/><rect x="1" y="10" width="4" height="1" fill="#cdcdcd"/><rect x="5" y="10" width="1" height="1" fill="#5a6f92"/><rect x="6" y="10" width="8" height="1" fill="#cdcdcd"/><rect x="14" y="10" width="1" height="1" fill="#92a3b9"/><rect x="0" y="11" width="1" height="1" fill="#ffffff"/><rect x="1" y="11" width="12" height="1" fill="#cdcdcd"/><rect x="13" y="11" width="2" height="1" fill="#92a3b9"/><rect x="0" y="12" width="1" height="1" fill="#ffffff"/><rect x="1" y="12" width="11" height="1" fill="#cdcdcd"/><rect x="12" y="12" width="3" height="1" fill="#92a3b9"/><rect x="0" y="13" width="1" height="1" fill="#ffffff"/><rect x="1" y="13" width="9" height="1" fill="#cdcdcd"/><rect x="10" y="13" width="5" height="1" fill="#92a3b9"/><rect x="0" y="14" width="15" height="1" fill="#92a3b9"/></svg>
<div class="dot" style="left:375px;top:444px"></div>
<div class="dot" style="left:383px;top:444px"></div>
<div class="dot" style="left:391px;top:444px"></div>
<div class="dot" style="left:399px;top:444px"></div>
<div class="dot" style="left:407px;top:444px"></div>
<div class="dot" style="left:415px;top:444px"></div>
<div class="dot" style="left:423px;top:444px"></div>
<div class="dot" style="left:431px;top:444px"></div>
<div class="dot" style="left:439px;top:444px"></div>
<div class="dot" style="left:447px;top:444px"></div>
<div class="dot" style="left:371px;top:449px"></div>
<div class="dot" style="left:379px;top:449px"></div>
<div class="dot" style="left:387px;top:449px"></div>
<div class="dot" style="left:395px;top:449px"></div>
<div class="dot" style="left:403px;top:449px"></div>
<div class="dot" style="left:411px;top:449px"></div>
<div class="dot" style="left:419px;top:449px"></div>
<div class="dot" style="left:427px;top:449px"></div>
<div class="dot" style="left:435px;top:449px"></div>
<div class="dot" style="left:443px;top:449px"></div>
<div class="dot" style="left:451px;top:449px"></div>
<div class="btn" style="left:495px;top:463px;width:88px;color:#8596b0;border-right-color:#9aabc2;border-bottom-color:#9aabc2">Akceptovat</div>
<div class="btn" style="left:608px;top:463px;width:88px;letter-spacing:-0.3px">Reklamovat</div>
<div class="lb" style="left:88px;top:475px;font-style:italic">Další údaje transakce</div>
<div style="left:86px;top:490px;width:612px;height:1px;background:#808080;box-shadow:0 1px 0 #fff"></div>
<div class="lb" style="left:86px;top:499px;">Popis transakce</div>
<div class="lb" style="left:544px;top:499px;">Typ operace</div>
<div class="f" style="left:86px;top:512px;width:458px;height:18px;background:#c0e0ff"><div class="c"><span class="tl">Fiktivní terminál pro dorovnání fakultních účtů-Dorovnání zůstatků na fakultních účtech--88</span></div></div>
<div class="f" style="left:544px;top:512px;width:152px;height:18px;background:#c0e0ff"><div class="c"><span class="tl">Kredit</span></div></div>
<div class="lb" style="left:86px;top:537px;">Generovaný kód transakce</div>
<div class="lb" style="left:472px;top:537px;">Důvod odmítnutí požadavku</div>
<div class="lb" style="left:625px;top:537px;">Variabilní symbol</div>
<div class="f" style="left:86px;top:550px;width:386px;height:18px;background:#c0e0ff"></div>
<div class="f" style="left:472px;top:550px;width:153px;height:18px;background:#c0e0ff"></div>
<div class="f" style="left:625px;top:550px;width:71px;height:18px;background:#c0e0ff"><div class="c"><span class="tl">88</span></div></div>
<div class="lb" style="left:86px;top:574px;">Komentář</div>
<div class="f" style="left:86px;top:588px;width:610px;height:36px;background:#c0e0ff"><div class="c"><span class="tl">Automatické dorovnání fakultního účtu.</span></div></div>
<div style="left:726px;top:140px;width:266px;height:1px;background:#91a2b8"></div>
<div style="left:726px;top:303px;width:266px;height:1px;background:#91a2b8"></div>
<div style="left:723px;top:143px;width:1px;height:158px;background:#91a2b8"></div>
<div style="left:994px;top:143px;width:1px;height:158px;background:#91a2b8"></div>
<div style="left:725px;top:141px;width:1px;height:1px;background:#a3b1c4"></div>
<div style="left:724px;top:142px;width:1px;height:1px;background:#a3b1c4"></div>
<div style="left:992px;top:141px;width:1px;height:1px;background:#a3b1c4"></div>
<div style="left:993px;top:142px;width:1px;height:1px;background:#a3b1c4"></div>
<div style="left:725px;top:302px;width:1px;height:1px;background:#a3b1c4"></div>
<div style="left:724px;top:301px;width:1px;height:1px;background:#a3b1c4"></div>
<div style="left:992px;top:302px;width:1px;height:1px;background:#a3b1c4"></div>
<div style="left:993px;top:301px;width:1px;height:1px;background:#a3b1c4"></div>
<div class="gap" style="left:741px;top:140px;width:83px"></div>
<div class="lg" style="left:745px;top:135px;letter-spacing:0.24px">Platební karta</div>
<div class="lb" style="right:181px;top:170px;text-align:right;">Evidenční číslo</div>
<div class="f" style="left:832px;top:168px;width:153px;height:18px;background:#c0e0ff"></div>
<div class="lb" style="right:181px;top:194px;text-align:right;">Číslo čipu</div>
<div class="f" style="left:832px;top:192px;width:153px;height:18px;background:#c0e0ff"><div class="c"><span class="tl">123</span></div></div>
<div class="lb" style="right:181px;top:218px;text-align:right;">Stav životního cyklu</div>
<div class="f" style="left:832px;top:216px;width:81px;height:18px;background:#c0e0ff"><div class="c"><span class="tl" style="letter-spacing:0.06px">Zadána do výroby</span></div></div>
<div class="lb" style="right:181px;top:243px;text-align:right;">Zablokování platnosti</div>
<div class="f" style="left:832px;top:241px;width:81px;height:18px;background:#c0e0ff"><div class="c"><span class="tl">Aktivní</span></div></div>
<div class="lb" style="right:181px;top:268px;text-align:right;">Typ</div>
<div class="f" style="left:832px;top:266px;width:81px;height:18px;background:#c0e0ff"><div class="c"><span class="tl">Studentská s ISIC</span></div></div>
<div style="left:726px;top:318px;width:266px;height:1px;background:#91a2b8"></div>
<div style="left:726px;top:450px;width:266px;height:1px;background:#91a2b8"></div>
<div style="left:723px;top:321px;width:1px;height:127px;background:#91a2b8"></div>
<div style="left:994px;top:321px;width:1px;height:127px;background:#91a2b8"></div>
<div style="left:725px;top:319px;width:1px;height:1px;background:#a3b1c4"></div>
<div style="left:724px;top:320px;width:1px;height:1px;background:#a3b1c4"></div>
<div style="left:992px;top:319px;width:1px;height:1px;background:#a3b1c4"></div>
<div style="left:993px;top:320px;width:1px;height:1px;background:#a3b1c4"></div>
<div style="left:725px;top:449px;width:1px;height:1px;background:#a3b1c4"></div>
<div style="left:724px;top:448px;width:1px;height:1px;background:#a3b1c4"></div>
<div style="left:992px;top:449px;width:1px;height:1px;background:#a3b1c4"></div>
<div style="left:993px;top:448px;width:1px;height:1px;background:#a3b1c4"></div>
<div class="gap" style="left:741px;top:318px;width:57px"></div>
<div class="lg" style="left:745px;top:313px;letter-spacing:0.6px">Terminál</div>
<div class="lb" style="right:181px;top:343px;text-align:right;">Název</div>
<div class="f" style="left:832px;top:341px;width:153px;height:18px;background:#c0e0ff"><div class="c"><span class="tl">Fakultní účty - dorovnání</span></div></div>
<div class="lb" style="right:145px;top:367px;text-align:right;">Typ vlastnictví</div>
<div class="f" style="left:868px;top:365px;width:81px;height:18px;background:#c0e0ff"><div class="c"><span class="tl">Vlastní</span></div></div>
<div class="lb" style="right:181px;top:391px;text-align:right;">Umístění</div>
<div class="f" style="left:832px;top:389px;width:153px;height:18px;background:#c0e0ff"><div class="c"><span class="tl">Fiktivní terminál pro dorovnání fakultních účtů</span></div></div>
<div class="lb" style="right:181px;top:415px;text-align:right;">Odstavení</div>
<div class="f" style="left:832px;top:413px;width:54px;height:18px;background:#c0e0ff"><div class="c"><span class="tl">Ne</span></div></div>
<div style="left:726px;top:466px;width:266px;height:1px;background:#91a2b8"></div>
<div style="left:726px;top:542px;width:266px;height:1px;background:#91a2b8"></div>
<div style="left:723px;top:469px;width:1px;height:71px;background:#91a2b8"></div>
<div style="left:994px;top:469px;width:1px;height:71px;background:#91a2b8"></div>
<div style="left:725px;top:467px;width:1px;height:1px;background:#a3b1c4"></div>
<div style="left:724px;top:468px;width:1px;height:1px;background:#a3b1c4"></div>
<div style="left:992px;top:467px;width:1px;height:1px;background:#a3b1c4"></div>
<div style="left:993px;top:468px;width:1px;height:1px;background:#a3b1c4"></div>
<div style="left:725px;top:541px;width:1px;height:1px;background:#a3b1c4"></div>
<div style="left:724px;top:540px;width:1px;height:1px;background:#a3b1c4"></div>
<div style="left:992px;top:541px;width:1px;height:1px;background:#a3b1c4"></div>
<div style="left:993px;top:540px;width:1px;height:1px;background:#a3b1c4"></div>
<div class="gap" style="left:741px;top:466px;width:44px"></div>
<div class="lg" style="left:745px;top:461px;letter-spacing:0px">Služba</div>
<div class="lb" style="right:181px;top:490px;text-align:right;">Název služby</div>
<div class="f" style="left:832px;top:488px;width:153px;height:18px;background:#c0e0ff"><div class="c"><span class="tl">Dorovnání zůstatků na fakultních účtech</span></div></div>
<div class="lb" style="right:181px;top:514px;text-align:right;">Zkratka typu služby</div>
<div class="f" style="left:832px;top:512px;width:153px;height:18px;background:#c0e0ff"><div class="c"><span class="tl" style="letter-spacing:-0.33px">DOROV_FAK_UCET</span></div></div>
<div style="left:726px;top:558px;width:266px;height:1px;background:#91a2b8"></div>
<div style="left:726px;top:629px;width:266px;height:1px;background:#91a2b8"></div>
<div style="left:723px;top:561px;width:1px;height:66px;background:#91a2b8"></div>
<div style="left:994px;top:561px;width:1px;height:66px;background:#91a2b8"></div>
<div style="left:725px;top:559px;width:1px;height:1px;background:#a3b1c4"></div>
<div style="left:724px;top:560px;width:1px;height:1px;background:#a3b1c4"></div>
<div style="left:992px;top:559px;width:1px;height:1px;background:#a3b1c4"></div>
<div style="left:993px;top:560px;width:1px;height:1px;background:#a3b1c4"></div>
<div style="left:725px;top:628px;width:1px;height:1px;background:#a3b1c4"></div>
<div style="left:724px;top:627px;width:1px;height:1px;background:#a3b1c4"></div>
<div style="left:992px;top:628px;width:1px;height:1px;background:#a3b1c4"></div>
<div style="left:993px;top:627px;width:1px;height:1px;background:#a3b1c4"></div>
<div class="gap" style="left:741px;top:558px;width:79px"></div>
<div class="lg" style="left:745px;top:553px;letter-spacing:0.38px">Poskytovatel</div>
<div class="lb" style="right:181px;top:578px;text-align:right;">Číslo</div>
<div class="f" style="left:832px;top:576px;width:81px;height:18px;background:#c0e0ff"><div class="c"><span class="tl">1</span></div></div>
<div class="lb" style="right:181px;top:602px;text-align:right;">Název</div>
<div class="f" style="left:832px;top:600px;width:153px;height:18px;background:#c0e0ff"><div class="c"><span class="tl" style="letter-spacing:-0.33px">ORGANIZACE</span></div></div>
</body></html>
